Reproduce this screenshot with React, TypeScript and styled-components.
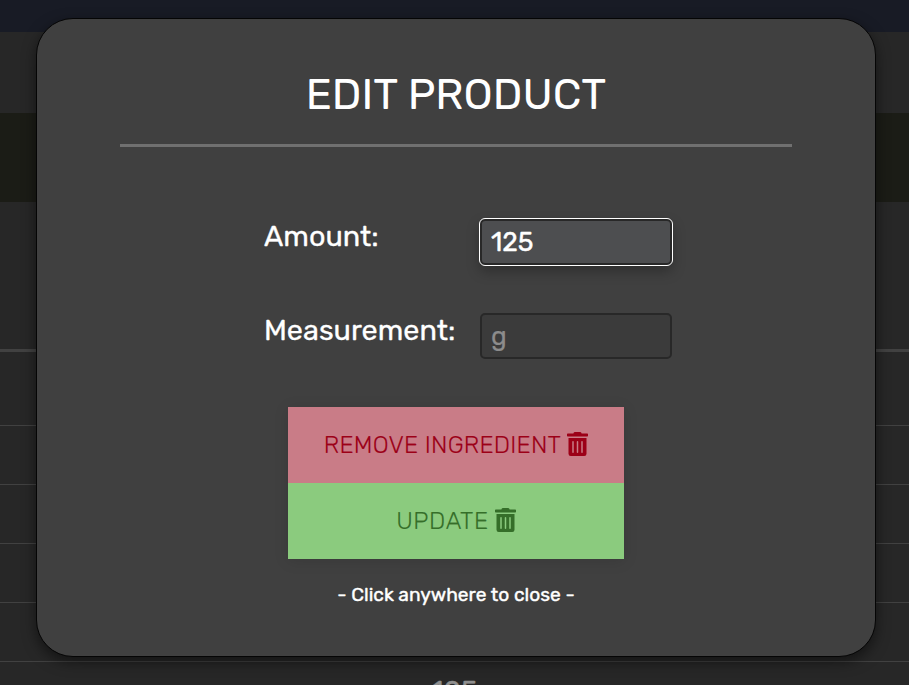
import React from "react";
import styled, { createGlobalStyle } from "styled-components";
import { FaTrashAlt } from "react-icons/fa";

const GlobalStyle = createGlobalStyle`
  * { box-sizing: border-box; }
  body {
    margin: 0;
    overflow: hidden;
    background: #272727;
    font-family: "Rubik", Roboto, "Liberation Sans", sans-serif;
    color: #fff;
  }
`;

const Screen = styled.div`
  display: grid;
  width: 909px;
  height: 685px;
  overflow: hidden;
`;

const Backdrop = styled.div`
  grid-area: 1 / 1;
  display: flex;
  flex-direction: column;
  height: 685px;
  overflow: hidden;
`;

const Band = styled.div<{ $height: number; $color?: string }>`
  flex: none;
  height: ${(p) => p.$height}px;
  background: ${(p) => p.$color ?? "#272727"};
`;

const TableRow = styled.div<{ $height: number; $line?: number }>`
  flex: none;
  height: ${(p) => p.$height}px;
  padding-top: 12px;
  border-top: ${(p) => p.$line ?? 1}px solid #414141;
  text-align: center;
  font-size: 28.8px;
  line-height: 34px;
  color: #8f8f8f;
  -webkit-text-stroke: 0.4px currentColor;
`;

const Modal = styled.section`
  grid-area: 1 / 1;
  margin: 18px 0 0 36px;
  width: 840px;
  height: 639px;
  display: flex;
  flex-direction: column;
  align-items: center;
  background: #404040;
  border: 1px solid #050505;
  border-radius: 37px;
  box-shadow: 0 5px 14px rgba(0, 0, 0, 0.5);
  z-index: 1;
`;

const Title = styled.h1`
  width: 672px;
  height: 128px;
  margin: 0;
  padding-top: 50px;
  border-bottom: 3px solid #707070;
  text-align: center;
  font-size: 43.1px;
  line-height: 51px;
  font-weight: 400;
  text-transform: uppercase;
`;

const Form = styled.form`
  width: 408px;
  margin: 72px 0 0 24px;
  display: grid;
  row-gap: 48px;
`;

const Field = styled.label`
  display: flex;
  justify-content: space-between;
  height: 46px;
`;

const FieldName = styled.span`
  font-size: 28.8px;
  line-height: 35px;
  white-space: nowrap;
  -webkit-text-stroke: 0.3px currentColor;
`;

const Input = styled.input<{ $active?: boolean }>`
  width: 192px;
  height: 46px;
  flex: none;
  padding: 0 9px;
  border: 2px solid #282828;
  border-radius: 5px;
  outline: ${(p) => (p.$active ? "1px solid #fff" : "none")};
  background: ${(p) => (p.$active ? "#4d4e50" : "#3b3b3b")};
  box-shadow: ${(p) => (p.$active ? "0 6px 14px rgba(0, 0, 0, 0.3)" : "none")};
  color: #fff;
  font-family: inherit;
  font-size: 26.4px;
  font-weight: 400;
  -webkit-text-stroke: 0.4px currentColor;
  &::placeholder { color: #8c8c8c; opacity: 1; -webkit-text-stroke: 0.2px #8c8c8c; }
`;

const Actions = styled.div`
  width: 336px;
  margin-top: 48px;
  display: flex;
  flex-direction: column;
  box-shadow: 0 2px 14px rgba(0, 0, 0, 0.12);
`;

const Action = styled.button<{ $danger?: boolean; $tracking: number }>`
  display: flex;
  align-items: center;
  justify-content: center;
  gap: 6px;
  height: 76px;
  padding: 0;
  border: 0;
  background: ${(p) => (p.$danger ? "#c97c87" : "#8bcb7e")};
  color: ${(p) => (p.$danger ? "#9c0017" : "#356e29")};
  font-family: inherit;
  font-size: 24px;
  font-weight: 300;
  text-transform: uppercase;
  letter-spacing: ${(p) => p.$tracking}px;
  -webkit-text-stroke: 0.15px currentColor;
  svg { width: 21px; height: 24px; margin-top: -2px; }
`;

const CloseHint = styled.p`
  margin: 25px 0 0;
  font-size: 19.2px;
  line-height: 22px;
  font-weight: 400;
  -webkit-text-stroke: 0.4px currentColor;
`;

export default function App() {
  return (
    <>
      <GlobalStyle />
      <Screen>
        <Backdrop>
          <Band $height={32} $color="#181b25" />
          <Band $height={81} />
          <Band $height={89} $color="#1b1c16" />
          <Band $height={147} />
          <TableRow $height={76} $line={3} />
          <TableRow $height={59} />
          <TableRow $height={59} />
          <TableRow $height={59} />
          <TableRow $height={59} />
          <TableRow $height={59}>125</TableRow>
        </Backdrop>
        <Modal>
          <Title>Edit product</Title>
          <Form>
            <Field>
              <FieldName>Amount:</FieldName>
              <Input $active defaultValue="125" />
            </Field>
            <Field>
              <FieldName>Measurement:</FieldName>
              <Input placeholder="g" />
            </Field>
          </Form>
          <Actions>
            <Action $danger $tracking={0.22}>
              Remove ingredient <FaTrashAlt />
            </Action>
            <Action $tracking={0.6}>
              Update <FaTrashAlt />
            </Action>
          </Actions>
          <CloseHint>- Click anywhere to close -</CloseHint>
        </Modal>
      </Screen>
    </>
  );
}
